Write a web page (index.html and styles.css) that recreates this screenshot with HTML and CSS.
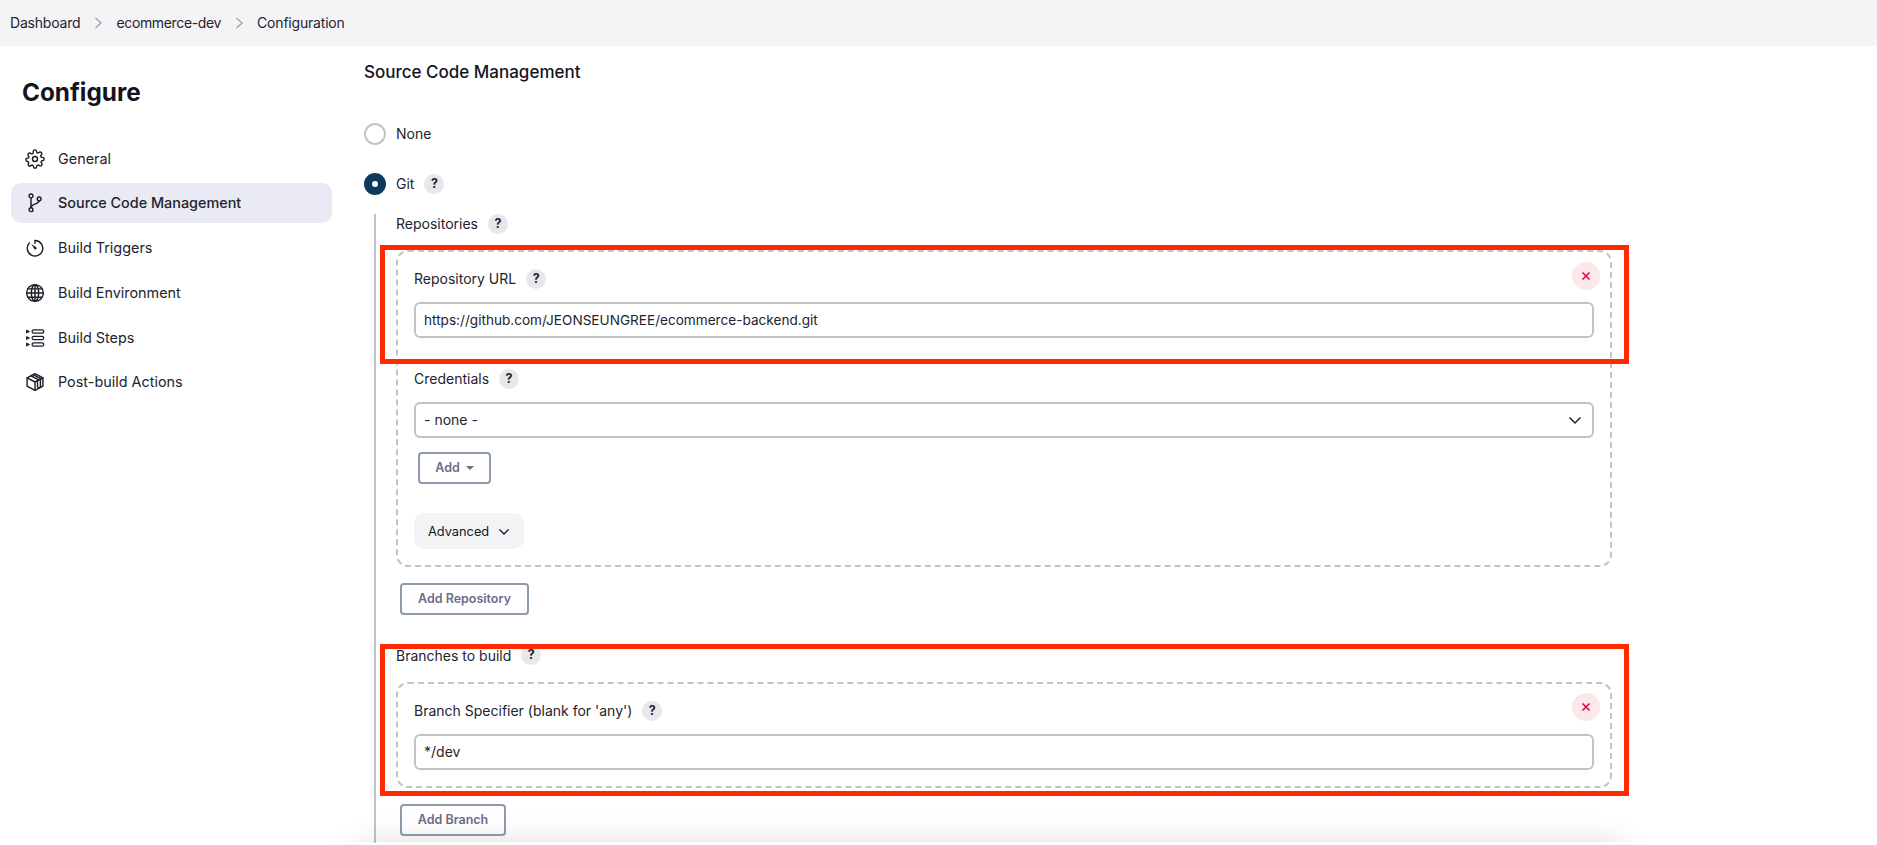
FILE: index.html
```html
<!DOCTYPE html>
<html lang="en">
<head>
<meta charset="utf-8">
<title>ecommerce-dev Config</title>
<link rel="stylesheet" href="styles.css">
</head>
<body>
<nav class="crumbs">
  <span class="crumb tight">Dashboard</span>
  <svg class="crumb-sep" viewBox="0 0 10 14"><path d="M2.5 2l5.500 5-5.500 5"/></svg>
  <span class="crumb tighter">ecommerce-dev</span>
  <svg class="crumb-sep" viewBox="0 0 10 14"><path d="M2.5 2l5.500 5-5.500 5"/></svg>
  <span class="crumb tight">Configuration</span>
</nav>
<div class="page">
  <aside class="side">
    <h1 class="side-title">Configure</h1>
    <ul class="side-list">
      <li class="side-item">
        <svg class="ico" viewBox="0 0 24 24"><circle cx="12" cy="12" r="3"/><path d="M19.400 15a1.650 1.650 0 0 0 .33 1.820l.06.06a2 2 0 1 1-2.830 2.830l-.06-.06a1.650 1.650 0 0 0-2.820 1.170V21a2 2 0 0 1-4 0v-.09a1.650 1.650 0 0 0-2.820-1.110l-.06.06a2 2 0 1 1-2.830-2.830l.06-.06A1.650 1.650 0 0 0 3.090 15H3a2 2 0 0 1 0-4h.09A1.650 1.650 0 0 0 4.200 8.180l-.06-.06a2 2 0 1 1 2.830-2.830l.06.06A1.650 1.650 0 0 0 9.850 4.200V3a2 2 0 0 1 4 0v.09a1.650 1.650 0 0 0 2.820 1.110l.06-.06a2 2 0 1 1 2.830 2.830l-.06.06a1.650 1.650 0 0 0 1.100 2.970H21a2 2 0 0 1 0 4h-.09a1.650 1.650 0 0 0-1.510 1z"/></svg>
        General
      </li>
      <li class="side-item active">
        <svg class="ico" viewBox="0 0 24 24"><circle cx="7.200" cy="3.500" r="2.300"/><circle cx="7.200" cy="20" r="2.300"/><circle cx="17" cy="7" r="2.300"/><path d="M7.200 5.800v11.900M17 9.300c0 4-9.800 3.500-9.800 8.400"/></svg>
        Source Code Management
      </li>
      <li class="side-item">
        <svg class="ico" viewBox="0 0 24 24"><path d="M12 3a9.300 9.300 0 1 1-6.800 3"/><path d="M12 3v3.200"/><path class="fill" d="M7.500 7.200l5.600 3.600a1.500 1.500 0 1 1-2 2z"/></svg>
        Build Triggers
      </li>
      <li class="side-item">
        <svg class="ico" viewBox="0 0 24 24"><circle cx="12" cy="12" r="10"/><ellipse cx="12" cy="12" rx="4.400" ry="10"/><path d="M12 2v20M2 12h20M3.500 7h17M3.500 17h17"/></svg>
        Build Environment
      </li>
      <li class="side-item">
        <svg class="ico steps" viewBox="0 0 24 24"><rect x="8.500" y="2.200" width="14" height="4" rx="2"/><rect x="8.500" y="10" width="14" height="4" rx="2"/><rect x="8.500" y="17.800" width="14" height="4" rx="2"/><path d="M2 2.800l3 1.400-3 1.400zM2 10.600l3 1.400-3 1.400zM2 18.400l3 1.400-3 1.400z"/></svg>
        Build Steps
      </li>
      <li class="side-item">
        <svg class="ico" viewBox="0 0 24 24"><path d="M12 2l9.500 5v10L12 22l-9.500-5V7z"/><path d="M2.500 7l9.500 5 9.500-5M12 12v10"/><path d="M7 4.500l9.500 5M10 3.200l9.500 5M15 11v6.500c0 2 3.500 2 3.500 0V9.500"/></svg>
        Post-build Actions
      </li>
    </ul>
  </aside>
  <main class="main">
    <h2 class="section-title">Source Code Management</h2>
    <div class="radio-row first">
      <span class="radio"></span>
      <span class="label">None</span>
    </div>
    <div class="radio-row second">
      <span class="radio on"></span>
      <span class="label">Git</span>
      <span class="help">?</span>
    </div>
    <div class="nested">
      <div class="field-head repos-head"><span class="label">Repositories</span><span class="help">?</span></div>
      <div class="repeat repo-box">
        <button class="close" aria-label="Delete"><svg viewBox="0 0 10 10"><path d="M1.500 1.500l7 7M8.500 1.500l-7 7"/></svg></button>
        <div class="field-head"><span class="label">Repository URL</span><span class="help">?</span></div>
        <div class="input url">https://github.com/JEONSEUNGREE/ecommerce-backend.git</div>
        <div class="field-head cred-head"><span class="label">Credentials</span><span class="help">?</span></div>
        <div class="input select">- none -
          <svg class="chev" viewBox="0 0 14 9"><path d="M1.500 1.500L7 7l5.500-5.500"/></svg>
        </div>
        <button class="btn add">Add<span class="caret"></span></button>
        <button class="adv">Advanced<svg class="adv-chev" viewBox="0 0 12 8"><path d="M1.500 1.500L6 6l4.500-4.500"/></svg></button>
      </div>
      <button class="btn add-repo">Add Repository</button>
      <div class="field-head branches-head"><span class="label">Branches to build</span><span class="help">?</span></div>
      <div class="repeat branch-box">
        <button class="close" aria-label="Delete"><svg viewBox="0 0 10 10"><path d="M1.500 1.500l7 7M8.500 1.500l-7 7"/></svg></button>
        <div class="field-head"><span class="label">Branch Specifier (blank for 'any')</span><span class="help">?</span></div>
        <div class="input">*/dev</div>
      </div>
      <button class="btn add-branch">Add Branch</button>
    </div>
  </main>
</div>
<div class="bottom-fade"></div>
<div class="mark mark-a"></div>
<div class="mark mark-b"></div>
</body>
</html>
```
FILE: styles.css
```css
* { box-sizing: border-box; }
html, body { height: 845px; overflow: hidden; }
body {
  margin: 0;
  background: #fff;
  color: #14141f;
  font: 14px/20px Inter, "Liberation Sans", sans-serif;
  position: relative;
}
.crumbs {
  height: 46px;
  background: #f4f4f7;
  display: flex;
  align-items: center;
  padding-left: 10px;
  color: #23232e;
}
.crumb.tight { letter-spacing: -0.2px; }
.crumb.tighter { letter-spacing: -0.35px; }
.crumb-sep {
  width: 10px;
  height: 14px;
  margin: 0 13.500px 0 12.500px;
  fill: none;
  stroke: #a0a0ac;
  stroke-width: 1.300;
}
.page { display: flex; }
.side { width: 354px; flex: none; padding: 30px 0 0 11px; }
.side-title {
  margin: 0 0 0 11px;
  font-size: 24.300px;
  line-height: 32px;
  font-weight: 700;
}
.side-list { list-style: none; margin: 30.500px 0 0; padding: 0; width: 321px; display: flex; flex-direction: column; gap: 4.750px; }
.side-item {
  height: 40px;
  display: flex;
  align-items: center;
  gap: 13px;
  padding-left: 14px;
  border-radius: 10px;
  color: #23232e;
  font-size: 14.400px;
}
.side-item.active { background: #e9eaf3; font-weight: 500; }
.ico {
  width: 20px;
  height: 20px;
  flex: none;
  fill: none;
  stroke: #1c1c28;
  stroke-width: 1.700;
  stroke-linecap: round;
  stroke-linejoin: round;
}
.ico.steps { stroke-width: 1.500; }
.ico .fill { fill: #1c1c28; stroke: none; }
.main { flex: 1; padding-top: 14px; }
.section-title {
  margin: 0;
  font-size: 17px;
  line-height: 24px;
  font-weight: 500;
  padding-left: 10px;
}
.radio-row { display: flex; align-items: center; height: 22px; padding-left: 10px; }
.radio-row.first { margin-top: 39px; }
.radio-row.second { margin-top: 28px; }
.radio {
  width: 22px;
  height: 22px;
  border-radius: 50%;
  border: 2px solid #bcc5ce;
  margin-right: 10px;
  flex: none;
}
.radio.on { background: #0f3a5c; border-color: #0f3a5c; position: relative; }
.radio.on::after {
  content: "";
  position: absolute;
  left: 6px;
  top: 6px;
  width: 6px;
  height: 6px;
  border-radius: 50%;
  background: #fff;
}
.label { color: #23232e; }
.help {
  width: 20px;
  height: 20px;
  border-radius: 50%;
  background: #e8e8ea;
  color: #23232e;
  font-size: 12.500px;
  font-weight: 700;
  line-height: 20px;
  text-align: center;
  margin-left: 10px;
  flex: none;
}
.nested {
  margin: 19px 0 0 20px;
  height: 629px;
  border-left: 2px solid #bcc5ce;
  padding-left: 20px;
}
.field-head { display: flex; align-items: center; height: 20px; }
.repos-head { margin-top: 1px; }
.repeat {
  position: relative;
  width: 1216px;
  border: 2px dashed #bcc5ce;
  border-radius: 12px;
  padding: 17px 15px 0 16px;
}
.repo-box { height: 317px; margin-top: 16px; }
.branch-box { height: 106px; margin-top: 16px; }
.close {
  position: absolute;
  right: 10px;
  top: 10px;
  width: 28px;
  height: 28px;
  border: 0;
  border-radius: 50%;
  background: #fbe9ea;
  padding: 9px;
  display: block;
}
.branch-box .close { top: 9px; }
.close svg { display: block; width: 10px; height: 10px; fill: none; stroke: #e6003c; stroke-width: 1.500; }
.input {
  height: 36px;
  margin-top: 13px;
  border: 2px solid #bcc5ce;
  border-radius: 6px;
  padding: 0 8px;
  display: flex;
  align-items: center;
  color: #23232e;
  width: 1180px;
}
.input.url { font-size: 13.600px; }
.select { justify-content: space-between; padding-right: 10px; }
.chev { width: 14px; height: 9px; fill: none; stroke: #23232e; stroke-width: 1.500; }
.cred-head { margin-top: 31px; }
.btn {
  display: flex;
  align-items: center;
  justify-content: center;
  height: 32px;
  border: 2px solid #8d9bab;
  border-radius: 4px;
  background: #fff;
  color: #6c6c88;
  font: 600 12.500px/1 Inter, "Liberation Sans", sans-serif;
  padding: 0;
}
.add { width: 73px; margin: 14px 0 0 4px; gap: 6px; }
.caret {
  width: 0;
  height: 0;
  border: 4px solid transparent;
  border-top-color: #6c6c88;
  border-bottom: 0;
}
.adv {
  display: flex;
  align-items: center;
  gap: 8.500px;
  margin-top: 29px;
  width: 110px;
  height: 36px;
  border: 0;
  border-radius: 10px;
  background: #f4f4f7;
  padding: 2px 14px 0;
  color: #14141f;
  font: 400 12.800px/1 Inter, "Liberation Sans", sans-serif;
}
.adv-chev { width: 12px; height: 8px; flex: none; fill: none; stroke: #14141f; stroke-width: 1.300; }
.add-repo { width: 129px; margin: 16px 0 0 4px; padding-top: 1px; }
.branches-head { margin-top: 31px; }
.branches-head .help { margin-top: -2px; }
.add-branch { width: 106px; margin: 16px 0 0 4px; padding-top: 1px; }
.bottom-fade {
  position: absolute;
  left: 0;
  right: 0;
  top: 800px;
  height: 42px;
  overflow: hidden;
  pointer-events: none;
}
.bottom-fade::after {
  content: "";
  position: absolute;
  left: 360px;
  top: 45px;
  width: 1260px;
  height: 60px;
  box-shadow: 0 0 32px rgba(0, 0, 0, .17);
}
.mark {
  position: absolute;
  left: 380px;
  width: 1249px;
  border: 5px solid #ff2a00;
  pointer-events: none;
}
.mark-a { top: 245px; height: 119px; }
.mark-b { top: 644px; height: 152px; }
```
